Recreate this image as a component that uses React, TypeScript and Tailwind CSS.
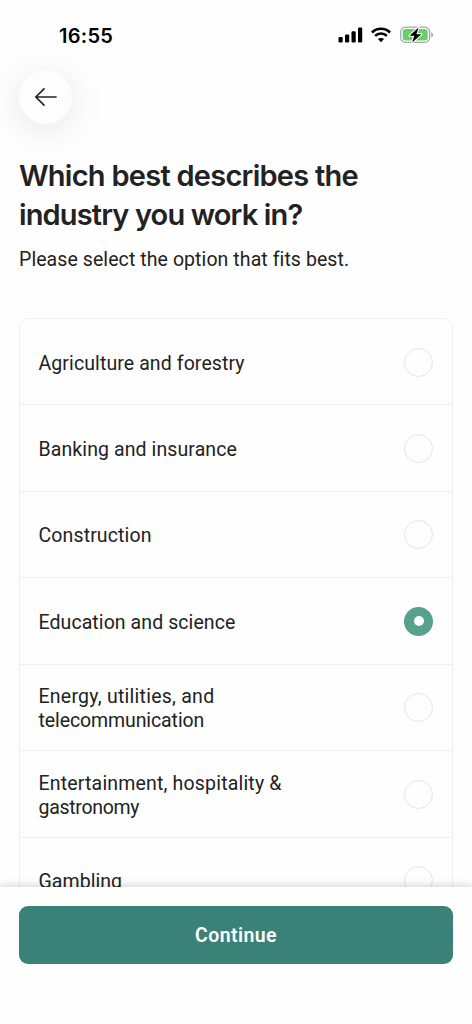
import { useState } from "react";

const industries = [
  { id: "agriculture", lines: ["Agriculture and forestry"], style: "tracking-[0.1px]" },
  { id: "banking", lines: ["Banking and insurance"], style: "tracking-[0.1px]" },
  { id: "construction", lines: ["Construction"], style: "tracking-[0.12px]" },
  { id: "education", lines: ["Education and science"], style: "tracking-[0.08px]" },
  { id: "energy", lines: ["Energy, utilities, and", "telecommunication"], style: "first:tracking-[0.25px] last:tracking-[-0.1px]" },
  { id: "entertainment", lines: ["Entertainment, hospitality &", "gastronomy"], style: "first:tracking-[0.18px] last:tracking-[-0.3px]" },
  { id: "gambling", lines: ["Gambling"], style: "tracking-[0.05px]" },
];

function StatusBar() {
  return (
    <div className="flex h-[70px] shrink-0 items-center justify-between pr-[38px] pl-[59px]">
      <span className="pt-px font-['Inter',sans-serif] text-[20px] leading-6 font-semibold tracking-[0.25px] text-black">16:55</span>
      <div className="flex items-center">
        {/* signal */}
        <svg width="25" height="16" viewBox="0 0 25 16" fill="black">
          <rect x="0.5" y="10" width="4.2" height="5.5" rx="1.2" />
          <rect x="7" y="7.5" width="4.2" height="8" rx="1.2" />
          <rect x="13.5" y="4.2" width="4.2" height="11.3" rx="1.2" />
          <rect x="20" y="0.5" width="4.2" height="15" rx="1.2" />
        </svg>
        {/* wifi */}
        <svg className="ml-[8px]" width="20" height="16" viewBox="0 0 20 16" fill="none" stroke="black" strokeWidth="2.6">
          <path d="M0.9 5.5C6 .4 14 .4 19.1 5.5" />
          <path d="M4.1 8.9c3.4-3.2 8.4-3.2 11.8 0" />
          <path d="M10 15.2 6.9 12.1c1.8-1.6 4.4-1.6 6.2 0Z" fill="black" stroke="none" />
        </svg>
        {/* battery */}
        <svg className="ml-[9px]" width="34" height="18" viewBox="0 0 34 18">
          <rect x="0.7" y="1.2" width="29" height="15.2" rx="5" fill="white" stroke="#a3a3a3" strokeWidth="1.2" />
          <rect x="2.7" y="3.1" width="25" height="11.4" rx="3.2" fill="#68ce67" />
          <path d="M31.3 6.2c2.2.8 2.2 4.4 0 5.2Z" fill="#a3a3a3" />
          <path d="M18.6 1.4 9.5 9.7h4.8l-2.1 6.8 9.2-8.3h-5Z" fill="black" stroke="white" strokeWidth="2.2" paintOrder="stroke" strokeLinejoin="round" />
        </svg>
      </div>
    </div>
  );
}

function Radio({ checked }: { checked: boolean }) {
  if (checked) {
    return (
      <span className="flex size-[29px] shrink-0 items-center justify-center rounded-full bg-[#57a18d]">
        <span className="size-[10px] rounded-full bg-white" />
      </span>
    );
  }
  return <span className="size-[29px] shrink-0 rounded-full border-[1.5px] border-[#e5e5e5]" />;
}

export default function App() {
  const [selected, setSelected] = useState("education");

  return (
    <div className="flex h-[1024px] w-[472px] flex-col overflow-hidden bg-[#fefefe] font-[Roboto,sans-serif] text-[#222222]">
      <StatusBar />

      <main className="flex min-h-0 flex-1 flex-col px-[19px]">
        <button
          aria-label="Back"
          className="flex h-[54px] w-[53px] shrink-0 items-center justify-center rounded-full bg-[#fdfdfd] shadow-[0_6px_36px_rgba(0,0,0,0.1)]"
        >
          <svg width="24" height="20" viewBox="0 0 24 20" fill="none" stroke="#222" strokeWidth="1.7" strokeLinecap="round" strokeLinejoin="round">
            <path d="M22 10H2M10 1.8 1.8 10l8.2 8.2" />
          </svg>
        </button>

        <h1 className="mt-[33px] font-['Inter',sans-serif] text-[29px] leading-[38px] font-semibold whitespace-nowrap">
          <span className="block tracking-[-0.74px]">Which best describes the</span>
          <span className="block pt-px tracking-[-0.86px]">industry you work in?</span>
        </h1>
        <p className="mt-[14px] text-[19.5px] leading-6 tracking-[0.08px]">Please select the option that fits best.</p>

        <div className="mt-[46px] rounded-t-[9px] border border-b-0 border-[#efefef]">
          {industries.map((item) => (
            <button
              key={item.id}
              onClick={() => setSelected(item.id)}
              className="flex h-[86.5px] w-full items-center justify-between border-b border-[#efefef] pt-px pr-[19px] pl-[18.5px] text-left first:h-[86px]"
            >
              <span className="pt-[3px] text-[19.5px] leading-6">
                {item.lines.map((line) => (
                  <span key={line} className={`block ${item.style}`}>{line}</span>
                ))}
              </span>
              <Radio checked={selected === item.id} />
            </button>
          ))}
        </div>
      </main>

      <footer className="relative h-[137px] shrink-0 bg-[#fefefe] px-[19px] pt-[19px] shadow-[0_0_9px_rgba(0,0,0,0.22)]">
        <button className="h-[58px] w-full rounded-[9px] bg-[#3a8177] pt-[2px] text-[19.5px] font-semibold tracking-[0.4px] text-white">
          Continue
        </button>
      </footer>
    </div>
  );
}
